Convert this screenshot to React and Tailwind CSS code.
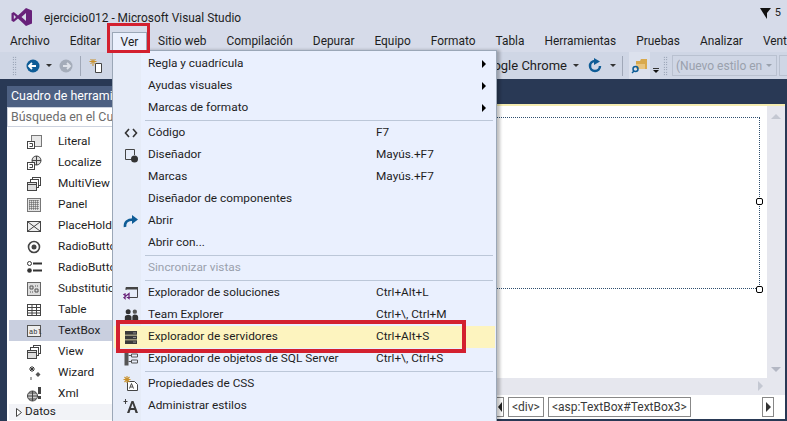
import React from "react";

const Svg = ({ children, w = 16, h = 16, className = "" }) => (
  <svg width={w} height={h} viewBox={`0 0 ${w} ${h}`} className={`shrink-0 ${className}`} fill="none">{children}</svg>
);

const toolIcons = {
  Literal: <Svg><rect x="5.5" y="1.5" width="10" height="11" fill="#e8e8e8" stroke="#777" /><rect x="1.5" y="7.5" width="7" height="7" fill="#fff" stroke="#444" /><path d="M3.5 12.5h3v-3h-3" stroke="#444" /></Svg>,
  Localize: <Svg><circle cx="10.5" cy="5.5" r="4.5" stroke="#444" fill="#ddd" /><path d="M6 5.5h9M10.5 1v9" stroke="#444" /><rect x="1.5" y="7.5" width="7" height="7" fill="#fff" stroke="#444" /><path d="M3.5 12.5h3v-3h-3" stroke="#444" /></Svg>,
  MultiView: <Svg><rect x="6.5" y="1.5" width="8" height="8" fill="#fff" stroke="#444" /><rect x="4.5" y="3.5" width="8" height="8" fill="#fff" stroke="#444" /><rect x="1.5" y="6.5" width="9" height="8" fill="#ddd" stroke="#444" /><path d="M1.5 8.5h9" stroke="#444" /></Svg>,
  Panel: <Svg><rect x="1.5" y="1.5" width="13" height="13" fill="#e4e4e4" stroke="#777" /><path d="M3 4h10M3 6h10M3 8h10M3 10h10M3 12h10M4 3v10M6 3v10M8 3v10M10 3v10M12 3v10" stroke="#555" strokeDasharray="1 1" /></Svg>,
  PlaceHolder: <Svg><rect x="1.5" y="3.5" width="13" height="10" fill="#eee" stroke="#444" /><path d="M2 4l12 9M14 4L2 13" stroke="#444" /></Svg>,
  RadioButton: <Svg><circle cx="8" cy="8" r="5.5" stroke="#444" strokeWidth="1.6" /><circle cx="8" cy="8" r="2.5" fill="#444" /></Svg>,
  RadioButtonList: <Svg><circle cx="3.5" cy="3.5" r="2" stroke="#333" /><circle cx="3.5" cy="10.5" r="2.3" fill="#333" /><path d="M7 3.5h9M7 10.5h9" stroke="#333" strokeWidth="2" /></Svg>,
  Substitution: <Svg><rect x="1.5" y="1.5" width="13" height="13" fill="#ddd" stroke="#666" /><path d="M4 5h3v3H4zM9 8h3v3H9z" stroke="#555" /><path d="M9 5h3M4 11h3" stroke="#555" strokeDasharray="1 1" /></Svg>,
  Table: <Svg><rect x="1.5" y="2.5" width="13" height="11" fill="#fff" stroke="#444" /><path d="M1.5 5.5h13M1.5 8.5h13M1.5 11h13M6 3v10M10.500 3v10" stroke="#444" /></Svg>,
  TextBox: <Svg><rect x="1.5" y="2.500" width="13" height="11" fill="#eee" stroke="#555" /><text x="3" y="10.500" fontSize="7" fontFamily="Liberation Mono" fill="#333">abl</text></Svg>,
  View: <Svg><rect x="7.5" y="1.5" width="7" height="8" fill="#fff" stroke="#444" /><rect x="4.5" y="3.5" width="8" height="8" fill="#fff" stroke="#444" /><rect x="1.5" y="6.5" width="9" height="8" fill="#ddd" stroke="#444" /><path d="M1.500 8.500h9" stroke="#444" /></Svg>,
  Wizard: <Svg><path d="M6 1v6M3 4h6M4 2l4 4M8 2L4 6" stroke="#333" /><path d="M12 7l2.500 2.500L12 12 9.500 9.500z" fill="#555" /><path d="M5 12v3" stroke="#555" /></Svg>,
  Xml: <Svg><circle cx="6.500" cy="10" r="5" fill="#ccc" stroke="#444" /><path d="M1.500 10h10M6.500 5v10M3 7h7M3 13h7" stroke="#444" /><rect x="12" y="1" width="3" height="7" fill="#444" /><rect x="12" y="10" width="3" height="3" fill="#444" /></Svg>,
};

const tools = ["Literal", "Localize", "MultiView", "Panel", "PlaceHolder", "RadioButton", "RadioButtonList", "Substitution", "Table", "TextBox", "View", "Wizard", "Xml"];

const menuIcons = {
  code: <svg width="14" height="10" viewBox="0 0 14 10" fill="none"><path d="M5 1L1.500 5 5 9M9 1l3.500 4L9 9" stroke="#333" strokeWidth="1.600" /></svg>,
  design: <Svg w={15} h={15}><path d="M8 11.500H1.500v-10h9V7" stroke="#444" /><circle cx="10.500" cy="11" r="3.500" fill="#333" /></Svg>,
  open: <svg width="16" height="14" viewBox="0 0 16 14" fill="none"><path d="M2 13C1.500 8 4.500 5.500 10 5.500" stroke="#0e5c96" strokeWidth="2.600" /><path d="M9 1l6 4.500L9 10z" fill="#0e5c96" /></svg>,
  solution: <Svg><path d="M4 12.500h10.500v-10H3V5" stroke="#444" /><path d="M3 2h12v2.500H3z" fill="#444" /><path d="M1 9.500l5 4V8.500l-5 4 1 1V9z" stroke="#68217a" strokeWidth="1.300" /></Svg>,
  team: <svg width="15" height="14" viewBox="0 0 18 16" className="shrink-0"><circle cx="5" cy="4" r="3" fill="#333" /><circle cx="13" cy="4" r="2.600" fill="#555" /><path d="M1 15v-4.500C1 8.500 3 8 5 8s4 .5 4 2.500V15zM10 15v-5c0-1 1-2.500 3-2.500s4 1 4 3V15z" fill="#333" /></svg>,
  server: <Svg w={14} h={15}><path d="M1 1h12v3.800H1zM1 5.600h12v3.800H1zM1 10.200h12v3.800H1z" fill="#3a3a3a" /><path d="M9 2.900h3M9 7.500h3M9 12.100h3" stroke="#8d8d8d" /></Svg>,
  object: <Svg><path d="M1.500 1.500h4v13h-4z" fill="#555" /><path d="M5.500 4.500h3M5.500 10.500h3" stroke="#555" /><path d="M8.500 3h6v3h-6zM8.500 9h6v3h-6z" stroke="#555" /></Svg>,
  css: <Svg><path d="M4.500 5.500h7l3 3v6h-10z" fill="#fff" stroke="#444" /><path d="M6.500 12.500l2-5 2 5M7.300 11h2.400" stroke="#444" /><path d="M4 0v7M.5 3.500h7M1.500 1l5 5M6.500 1l-5 5" stroke="#c9912b" strokeWidth="1.100" /></Svg>,
  style: <Svg><path d="M4 15L8.500 3h2L15 15h-2.400l-1-3H7.400l-1 3zM8 10h3L9.500 5.500z" fill="#3a3a3a" fillRule="evenodd" /><path d="M2.500 1v5M0.500 3.500h4" stroke="#333" strokeWidth="0.900" /></Svg>,
};

const Sep = () => <div className="ml-[32px] mr-[3px] my-px h-px bg-[#bcc7d8]" />;

const Item = ({ label, shortcut, icon, arrow, disabled, active }) => (
  <div className={`flex items-center h-[22px] mx-px ${active ? "bg-[#fdf4bf]" : ""} ${disabled ? "text-[#9aa1ad]" : "text-[#1e1e1e]"}`}>
    <span className="w-[34px] flex justify-center shrink-0">{icon}</span>
    <span className="w-[228px] shrink-0 whitespace-nowrap">{label}</span>
    <span className="flex-1 whitespace-nowrap">{shortcut}</span>
    {arrow && <span className="block mr-[9px] w-0 h-0 border-y-[4px] border-y-transparent border-l-[4px] border-l-black" />}
  </div>
);

const Caret = ({ className = "border-t-[#333]" }) => <span className={`block w-0 h-0 border-x-[3px] border-x-transparent border-t-[3px] ${className}`} />;

const Grip = () => (
  <span className="block w-[5px] h-[20px] shrink-0 bg-[radial-gradient(#6d7a8f_0.7px,transparent_0.8px)] bg-[length:2.500px_2.500px]" />
);

const menuLabels = ["Archivo", "Editar", "Ver", "Sitio web", "Compilación", "Depurar", "Equipo", "Formato", "Tabla", "Herramientas", "Pruebas", "Analizar", "Ventana"];

const Handle = ({ className }) => <span className={`absolute w-[7px] h-[7px] rounded-[2px] border border-black bg-white ${className}`} />;

export default function App() {
  return (
    <div className="relative w-[787px] h-[421px] overflow-hidden flex flex-col bg-[#d6dbe9] text-[11.800px] text-[#1e1e1e] font-['Roboto','Liberation_Sans',sans-serif]">
      {/* title */}
      <div className="h-[31px] flex items-start shrink-0">
        <svg width="22" height="20" viewBox="0 0 22 20" className="ml-[11px] mt-[7px] shrink-0">
          <path d="M15 1l6 2.500v13L15 19 7 11.500 2.800 15 .500 13.800V6.200L2.800 5 7 8.500zM15 6l-4.500 4 4.500 4zM2.800 7.700v4.600L5 10z" fill="#68217a" fillRule="evenodd" />
        </svg>
        <span className="ml-[11px] mt-[10px] whitespace-nowrap text-[11.900px]">ejercicio012 - Microsoft Visual Studio</span>
        <div className="ml-auto mr-[6px] mt-[5px] flex items-center gap-[3px]">
          <svg width="12" height="13" viewBox="0 0 12 13"><path d="M0 1h11L7 6v6L5 9z" fill="#111" /></svg>
          <span className="text-[11px]">5</span>
        </div>
      </div>
      {/* menu bar */}
      <div className="h-[21px] flex items-center shrink-0 pl-[10px] gap-[20px] whitespace-nowrap text-[11.900px]">
        {menuLabels.map((m) => <span key={m}>{m}</span>)}
      </div>
      {/* toolbar */}
      <div className="h-[27px] flex items-center shrink-0 pl-[12px] bg-[#cfd6e5] [&>*]:shrink-0">
        <Grip />
        <svg width="14" height="14" viewBox="0 0 14 14" className="ml-[9px]"><circle cx="7" cy="7" r="6.500" fill="#0e5c96" /><path d="M3 7h7M6 4L3 7l3 3" stroke="#fff" strokeWidth="1.800" fill="none" /></svg>
        <span className="ml-[6px]"><Caret /></span>
        <svg width="14" height="14" viewBox="0 0 14 14" className="ml-[7px]"><circle cx="7" cy="7" r="6.500" fill="#a4acb9" /><path d="M11 7H4M8 4l3 3-3 3" stroke="#dfe3ea" strokeWidth="1.800" fill="none" /></svg>
        <span className="ml-[7px] w-px h-[20px] bg-[#a0a8b8]" />
        <Svg className="ml-[8px]"><path d="M6.500 5.500h6v9h-6z" fill="#fff" stroke="#444" /><path d="M4 1v7M.5 3.500h7M1.500 1l5 5M6.500 1l-5 5" stroke="#c9912b" /></Svg>
        <div className="ml-[372px] w-[90px] overflow-hidden whitespace-nowrap flex justify-end text-[13px]"><span>Google Chrome</span></div>
        <span className="ml-[6px]"><Caret /></span>
        <svg width="15" height="16" viewBox="0 0 15 16" className="ml-[9px]" fill="none"><path d="M12 8a5 5 0 1 1-5-5" stroke="#0e5c96" strokeWidth="2.500" /><path d="M6 0l6 3.500L6 7z" fill="#0e5c96" /></svg>
        <span className="ml-[7px]"><Caret /></span>
        <span className="ml-[6px] w-px h-[20px] bg-[#a0a8b8]" />
        <div className="ml-[6px] w-[21px] h-full bg-[#dce1ed] flex items-center justify-center">
          <svg width="17" height="16" viewBox="0 0 17 16"><path d="M5 3h4l1-2h6v10H5z" fill="#d9a94d" /><path d="M5 6h9v5H5z" fill="#e8c47f" /><circle cx="4.500" cy="11" r="2.500" fill="none" stroke="#0e5c96" strokeWidth="1.500" /><path d="M3 13l-2 2" stroke="#0e5c96" strokeWidth="1.500" /></svg>
        </div>
        <span className="ml-[3px] mt-[10px] w-[6px] flex flex-col items-center gap-px"><span className="w-[6px] h-px bg-[#333]" /><Caret className="border-t-[#111]" /></span>
        <span className="ml-[4px]"><Grip /></span>
        <div className="ml-[4px] w-[105px] h-[21px] border border-[#b9c1d0] flex items-center justify-between pl-[3px] pr-[4px] text-[#9aa1ad] text-[12px] whitespace-nowrap">
          (Nuevo estilo en
          <Caret className="border-t-[#9aa1ad]" />
        </div>
        <div className="ml-[2px] w-[20px] h-[21px] border border-[#b9c1d0]" />
      </div>
      {/* body */}
      <div className="flex-1 min-h-0 flex bg-[#293955] pl-[7px] pr-[2px]">
        {/* toolbox */}
        <div className="w-[120px] shrink-0 mt-[7px] flex flex-col bg-white">
          <div className="h-[21px] bg-[#4d6082] text-white flex items-center pl-[4px] whitespace-nowrap overflow-hidden text-[12.400px]">Cuadro de herramientas</div>
          <div className="h-[20px] border border-[#ccd2de] flex items-center pl-[3px] text-[#6d6d6d] whitespace-nowrap overflow-hidden text-[12.400px]">Búsqueda en el Cuadro</div>
          <div className="flex-1 pt-[4px] ml-[2px] overflow-hidden">
            {tools.map((k) => (
              <div key={k} className={`h-[21px] flex items-center pl-[17px] ${k === "TextBox" ? "bg-[#c9cfdf]" : ""}`}>
                {toolIcons[k]}
                <span className="ml-[16px] whitespace-nowrap">{k}</span>
              </div>
            ))}
            <div className="h-[16px] -ml-[2px] bg-[#f2f3f7] flex items-center pl-[9px] gap-[3px]">
              <svg width="6" height="9" viewBox="0 0 6 9"><path d="M.5.5l5 4-5 4z" fill="#fff" stroke="#444" /></svg>
              Datos
            </div>
          </div>
        </div>
        {/* document */}
        <div className="flex-1 min-w-0 flex flex-col mb-[2px] mt-[25px]">
          <div className="relative flex-1 min-h-0 flex border-t-2 border-[#f5ecb0] bg-[#e6e7ee]">
            <div className="flex-1 relative bg-white mb-[17px]">
              <div className="relative mt-[11px] ml-[60px] mr-[7px] h-[172px] border border-dotted border-[#2f4f6f]">
                <Handle className="-left-[4px] top-[168px]" />
                <Handle className="-right-[4px] top-[168px]" />
                <Handle className="-right-[4px] top-[80px]" />
              </div>
              <span className="absolute -bottom-[13px] right-[4px] block w-0 h-0 border-y-[5px] border-y-transparent border-l-[5px] border-l-[#c4c8d2]" />
            </div>
            <div className="w-[18px] flex flex-col items-center justify-between pt-[8px] pb-[23px]">
              <span className="block w-0 h-0 border-x-[5px] border-x-transparent border-b-[5px] border-b-[#c4c8d2]" />
              <span className="block w-0 h-0 border-x-[5px] border-x-transparent border-t-[5px] border-t-[#b4b8c4]" />
            </div>
          </div>
          <div className="h-[24px] shrink-0 bg-white flex items-center text-[#3a3a3a] text-[12px]">
            <div className="ml-[369px] mr-[4px] w-[8px] h-[20px] border border-l-0 border-[#888] flex items-center justify-end pr-px">
              <span className="block w-0 h-0 border-y-[5px] border-y-transparent border-r-[4px] border-r-[#222]" />
            </div>
            <div className="h-[20px] px-[3px] border border-[#888] flex items-center">&lt;div&gt;</div>
            <div className="ml-[4px] h-[20px] px-[3px] border border-[#888] flex items-center whitespace-nowrap">&lt;asp:TextBox#TextBox3&gt;</div>
            <div className="ml-auto mr-[11px] w-[12px] h-[20px] border border-[#888] flex items-center justify-center">
              <span className="block w-0 h-0 border-y-[5px] border-y-transparent border-l-[5px] border-l-[#333]" />
            </div>
          </div>
        </div>
      </div>

      {/* Ver tab */}
      <div className="absolute left-[112px] top-[32px] w-[35px] h-[19px] z-20 bg-[#eaf0fd] border border-b-0 border-[#9ba7b7] flex items-center justify-center text-[12px]">Ver</div>
      {/* dropdown */}
      <div className="absolute left-[112px] top-[50px] w-[385px] h-[380px] z-10 bg-[linear-gradient(90deg,#e6ecf8_28px,#eaf0fe_28px)] border border-[#9ba7b7] shadow-[3px_0_3px_rgba(0,0,0,0.25)] pt-[2px]">
        <Item label="Regla y cuadrícula" arrow />
        <Item label="Ayudas visuales" arrow />
        <Item label="Marcas de formato" arrow />
        <Sep />
        <Item label="Código" shortcut="F7" icon={menuIcons.code} />
        <Item label="Diseñador" shortcut="Mayús.+F7" icon={menuIcons.design} />
        <Item label="Marcas" shortcut="Mayús.+F7" />
        <Item label="Diseñador de componentes" />
        <Item label="Abrir" icon={menuIcons.open} />
        <Item label="Abrir con..." />
        <Sep />
        <Item label="Sincronizar vistas" disabled />
        <Sep />
        <Item label="Explorador de soluciones" shortcut="Ctrl+Alt+L" icon={menuIcons.solution} />
        <Item label="Team Explorer" shortcut="Ctrl+\, Ctrl+M" icon={menuIcons.team} />
        <Item label="Explorador de servidores" shortcut="Ctrl+Alt+S" icon={menuIcons.server} active />
        <Item label="Explorador de objetos de SQL Server" shortcut="Ctrl+\, Ctrl+S" icon={menuIcons.object} />
        <Sep />
        <Item label="Propiedades de CSS" icon={menuIcons.css} />
        <Item label="Administrar estilos" icon={menuIcons.style} />
      </div>
      {/* callouts */}
      <div className="absolute left-[107px] top-[23px] w-[43px] h-[30px] z-30 border-[3px] border-[#d3202f]" />
      <div className="absolute left-[116px] top-[320px] w-[350px] h-[33px] z-30 border-[4px] border-[#d3202f]" />
    </div>
  );
}
